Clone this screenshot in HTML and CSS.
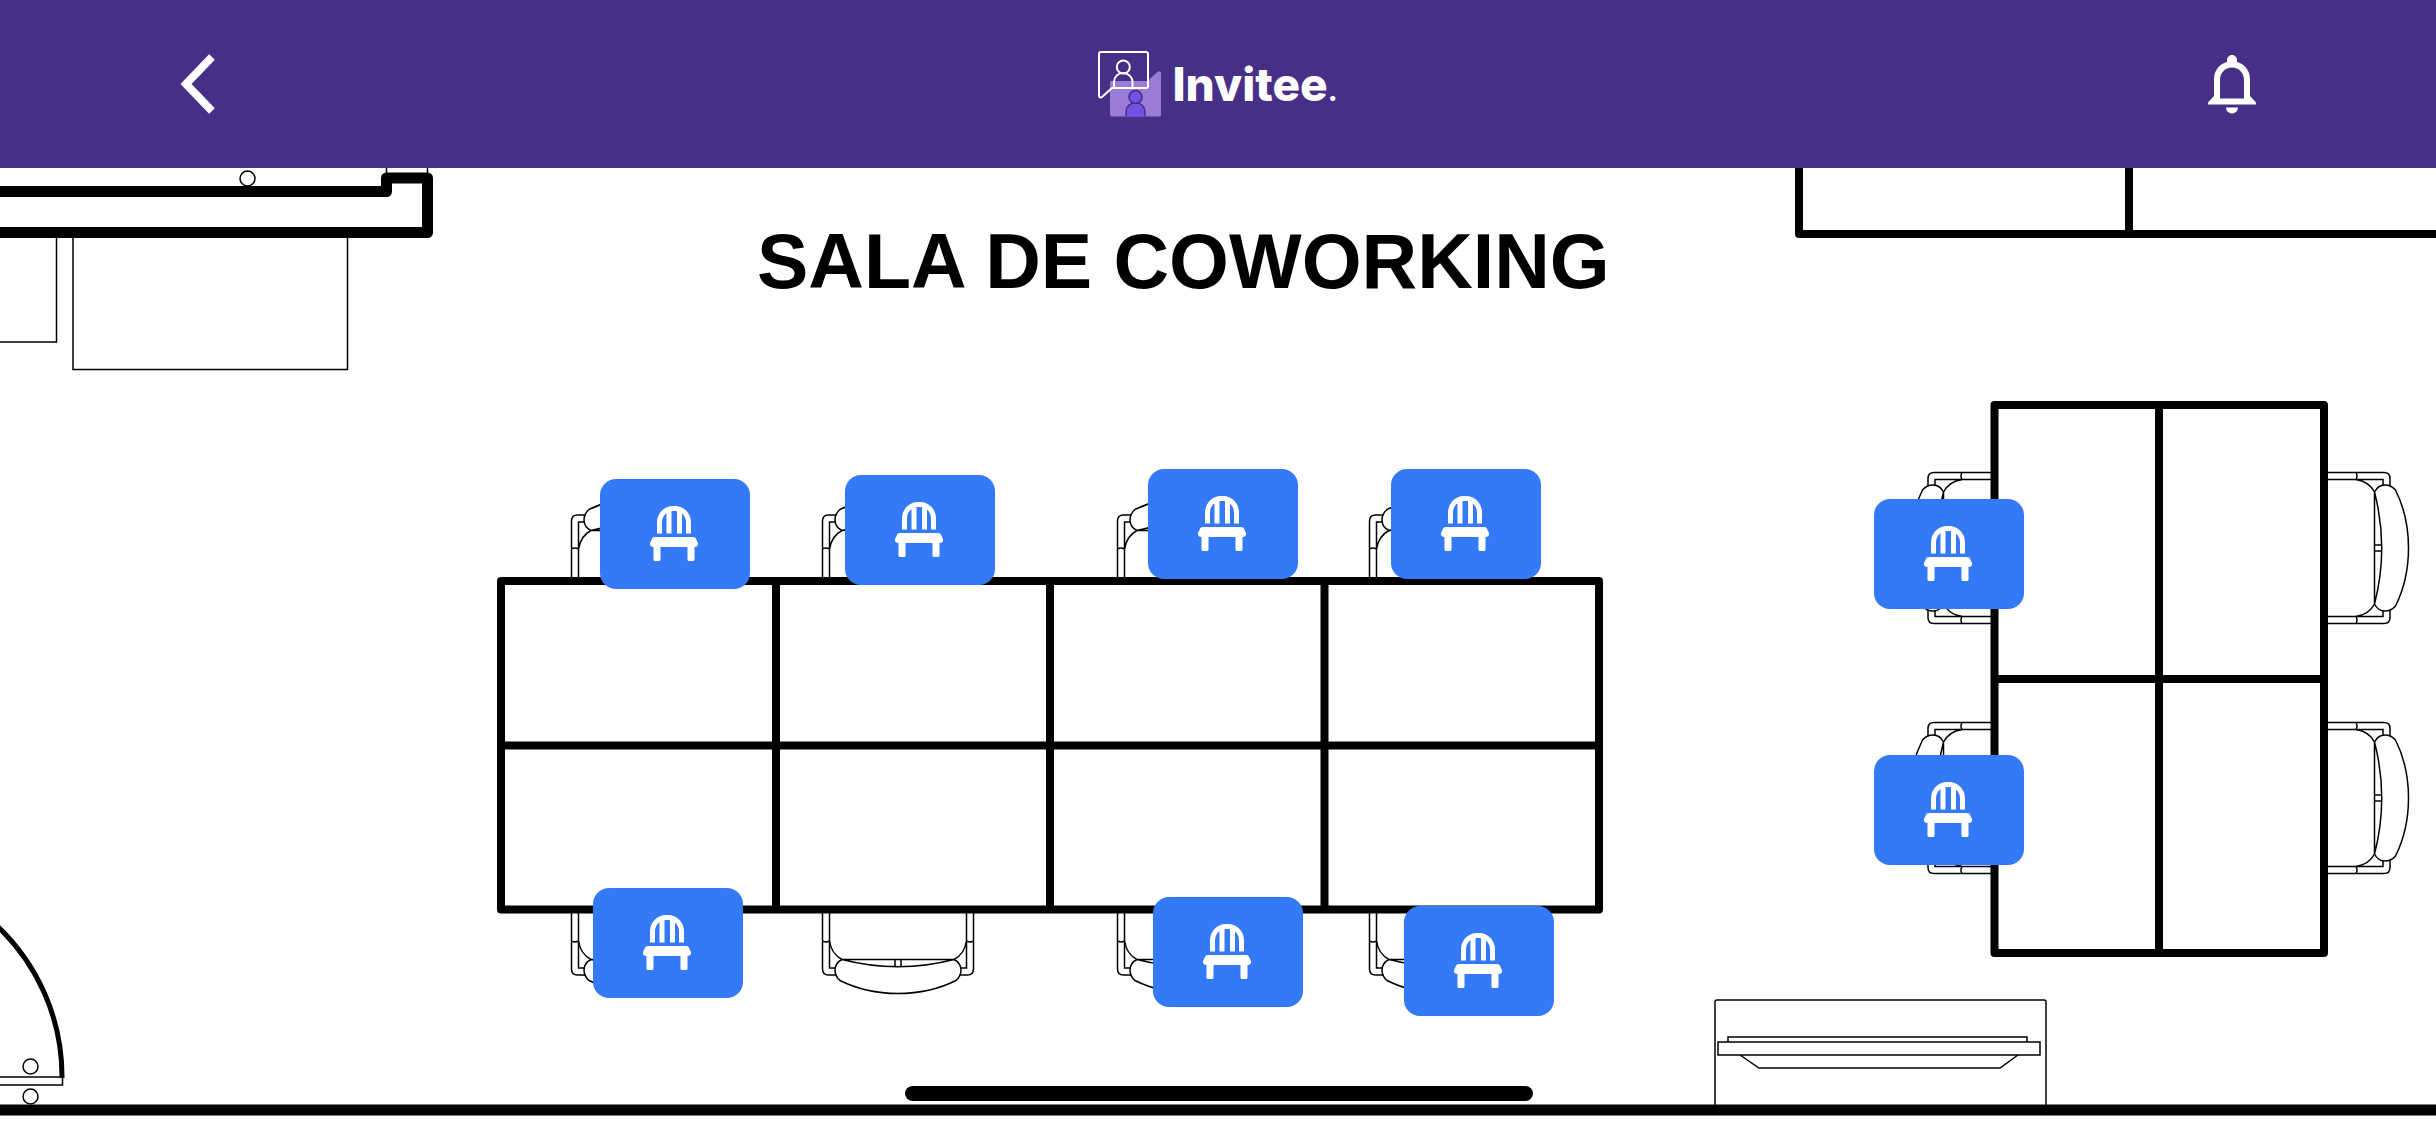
FILE: index.html
```html
<!DOCTYPE html>
<html lang="es">
<head>
<meta charset="utf-8">
<meta name="viewport" content="width=device-width, initial-scale=1">
<title>Invitee</title>
<link rel="stylesheet" href="styles.css">
</head>
<body>
<header class="topbar">
  <button class="icon-button back" type="button" aria-label="Volver">
    <svg width="36" height="60" viewBox="0 0 36 60" fill="none" stroke="#fff" stroke-width="8"><path d="M33 3 7 30l26 27"/></svg>
  </button>
  <a class="brand" href="#">
    <svg class="brand-mark" width="64" height="68" viewBox="0 0 64 68" aria-hidden="true">
      <path fill="#9b7bd8" d="M15 31h34.500L59.500 22c2-1.500 3.500-.5 3.500 1.500V64.500a2 2 0 0 1-2 2H14a2 2 0 0 1-2-2V33a2 2 0 0 1 3-2z"/>
      <path fill="#754fe6" stroke="#472f88" stroke-width="1.500" d="M28 66.500V62a9.500 9.500 0 0 1 19 0v4.500"/>
      <circle cx="37.500" cy="47" r="6.500" fill="#754fe6" stroke="#472f88" stroke-width="1.500"/>
      <path fill="none" stroke="#fff" stroke-width="2" stroke-linejoin="round" d="M3 2h45a2 2 0 0 1 2 2v32a2 2 0 0 1-2 2H14L4 47c-1.500 1-3 .5-3-1.500V4a2 2 0 0 1 2-2zM16 38v-6c0-5 4-9 9-9s9.500 4 9.500 9v6"/>
      <circle cx="25.300" cy="17" r="6.500" fill="none" stroke="#fff" stroke-width="2"/>
    </svg>
    <span class="brand-name">Invitee<span class="brand-dot">.</span></span>
  </a>
  <button class="icon-button bell" type="button" aria-label="Notificaciones">
    <svg width="50" height="60" viewBox="0 0 50 60" fill="#fff"><path fill-rule="evenodd" d="M20 8V6a5 5 0 0 1 10 0v2c7.500 2 13 8.500 13 17v17l6 6.500V50.500H1V48.500L7 42V25c0-8.500 5.500-15 13-17zM13 44.500h24V26c0-7-5-12.500-12-12.500S13 19 13 26z"/><path d="M19 53.500h12a6 6 0 0 1-12 0z"/></svg>
  </button>
</header>

<main class="plan">
  <svg class="drawing" viewBox="0 168 2436 957" fill="none" stroke="#000">
    <defs>
      <g id="chair">
        <path d="M-75.500 0V60q0 6 6 6h8M-68.500 0V59h6M-75.500 32q3.500 2 7 0M75.500 0V60q0 6-6 6h-8M68.500 0V59h-6M75.500 32q-3.500 2-7 0"/>
        <path d="M-68.500 32q2 13 12.500 18.500H56q10.500-5.500 12.500-18.500M-56 50.500Q0 65 56 50.500M-3 50.500v7.500M3 50.500v7.500"/>
        <path d="M-56 50.500C-61 53-63 57-63 61s2 8 5 10.500Q-32 84.500 0 84.500T58 71.500C61 69 63 65 63 61s-2-8-7-10.500"/>
      </g>
      <symbol id="seat" viewBox="0 0 150 110">
        <path fill="none" stroke="#fff" stroke-width="5" d="M59.500 54.500V43.500a13.500 14 0 0 1 13.500-14h2a13.500 14 0 0 1 13.500 14V54.500M69 54.500V30M79.500 54.500V30"/>
        <path fill="#fff" d="M55 58h38c2 0 3 1 3.500 3l1.500 3c.5 2.500-1 4-3.500 4v12.500q0 1.500-1.500 1.500h-4q-1.500 0-1.500-1.500V68h-27v12.500q0 1.500-1.500 1.500h-4q-1.500 0-1.500-1.500V68c-2.500 0-4-1.500-3.500-4l1.500-3c.5-2 1.500-3 3.500-3z"/>
      </symbol>
    </defs>

    <g stroke-width="1.500">
      <path d="M386.500 168v8M427.500 168v8M0 342h56.500V234M73 234V369.500H347.500V234"/>
      <circle cx="247.500" cy="178.500" r="7.500"/>
      <path d="M1715 1106V1002q0-2 2-2H2044q2 0 2 2v104M1718 1042H2040v13H1718zM1728 1042v-5H2027v5M1740 1055l19 13H2000l18-13"/>
      <circle cx="30.500" cy="1066.500" r="7.500"/>
      <circle cx="30.500" cy="1096.500" r="7.500"/>
      <path d="M0 1077H62.500v8H0"/>
    </g>

    <g stroke-width="1.500">
      <use href="#chair" transform="translate(647 581) scale(1 -1)"/>
      <use href="#chair" transform="translate(898 581) scale(1 -1)"/>
      <use href="#chair" transform="translate(1193 581) scale(1 -1)"/>
      <use href="#chair" transform="translate(1445 581) scale(1 -1)"/>
      <use href="#chair" transform="translate(647 909)"/>
      <use href="#chair" transform="translate(898 909)"/>
      <use href="#chair" transform="translate(1193 909)"/>
      <use href="#chair" transform="translate(1445 909)"/>
      <use href="#chair" transform="translate(1994 548) rotate(90)"/>
      <use href="#chair" transform="translate(1994 798) rotate(90)"/>
      <use href="#chair" transform="translate(2324 548) rotate(-90)"/>
      <use href="#chair" transform="translate(2324 798) rotate(-90)"/>
    </g>

    <g stroke-width="11" stroke-linejoin="round">
      <path d="M-10 191.500H386.500V178H427.500V232.500H-10M-10 1110H2446"/>
    </g>
    <g stroke-width="8" stroke-linejoin="round">
      <path d="M501 581H1599V909.500H501zM501 745.500H1599M776 581V909M1050 581V909M1324.500 581V909"/>
      <path d="M1994.500 405H2324V953H1994.500zM1994.500 679H2324M2159 405V953"/>
      <path d="M1799 160V234H2446M2129 160V234"/>
    </g>
    <path stroke-width="5" d="M-6 923A207.500 207.500 0 0 1 62 1078"/>
    <text class="room-name" x="757" y="288">SALA DE COWORKING</text>
  </svg>

  <button class="pin" type="button" aria-label="Puesto 1" style="--x:600;--y:311"><svg><use href="#seat"/></svg></button>
  <button class="pin" type="button" aria-label="Puesto 2" style="--x:845;--y:307"><svg><use href="#seat"/></svg></button>
  <button class="pin" type="button" aria-label="Puesto 3" style="--x:1148;--y:301"><svg><use href="#seat"/></svg></button>
  <button class="pin" type="button" aria-label="Puesto 4" style="--x:1391;--y:301"><svg><use href="#seat"/></svg></button>
  <button class="pin" type="button" aria-label="Puesto 5" style="--x:593;--y:720"><svg><use href="#seat"/></svg></button>
  <button class="pin" type="button" aria-label="Puesto 6" style="--x:1153;--y:729"><svg><use href="#seat"/></svg></button>
  <button class="pin" type="button" aria-label="Puesto 7" style="--x:1404;--y:738"><svg><use href="#seat"/></svg></button>
  <button class="pin" type="button" aria-label="Puesto 8" style="--x:1874;--y:331"><svg><use href="#seat"/></svg></button>
  <button class="pin" type="button" aria-label="Puesto 9" style="--x:1874;--y:587"><svg><use href="#seat"/></svg></button>
</main>
<div class="home-indicator"></div>
</body>
</html>
```
FILE: styles.css
```css
* {
  box-sizing: border-box;
}

body {
  margin: 0;
  background: #fefefe;
  font-family: "Liberation Sans", Arial, sans-serif;
  overflow: hidden;
}

.topbar {
  display: grid;
  grid-template-columns: 1fr auto 1fr;
  align-items: center;
  height: 168px;
  padding: 0 179px;
  background: #472f88;
}

.icon-button {
  display: flex;
  padding: 0;
  border: 0;
  background: none;
  cursor: pointer;
}

.back {
  justify-self: start;
}

.bell {
  justify-self: end;
}

.brand {
  display: flex;
  align-items: center;
  gap: 10px;
  color: #fff;
  text-decoration: none;
}

.brand-name {
  padding-top: 6px;
  font-family: Inter, sans-serif;
  font-size: 46px;
  font-weight: 800;
  line-height: 56px;
}

.brand-dot {
  font-size: 28px;
}

/* Pins are placed in plan units, on a 2436 by 957 canvas. */
.plan {
  position: relative;
  aspect-ratio: 2436 / 957;
  overflow: hidden;
}

.drawing {
  display: block;
  width: 100%;
  height: 100%;
}

.room-name {
  fill: #000;
  stroke: none;
  font-size: 77px;
  font-weight: 700;
}

.pin {
  position: absolute;
  left: calc(var(--x) / 2436 * 100%);
  top: calc(var(--y) / 957 * 100%);
  width: calc(150 / 2436 * 100%);
  aspect-ratio: 150 / 110;
  padding: 0;
  border: 0;
  border-radius: 16px;
  background: #347af6;
  cursor: pointer;
}

.pin svg {
  display: block;
  width: 100%;
  height: 100%;
}

.home-indicator {
  position: fixed;
  left: 50%;
  bottom: 24px;
  width: 628px;
  height: 15px;
  margin-left: -313px;
  border-radius: 8px;
  background: #000;
}
```
